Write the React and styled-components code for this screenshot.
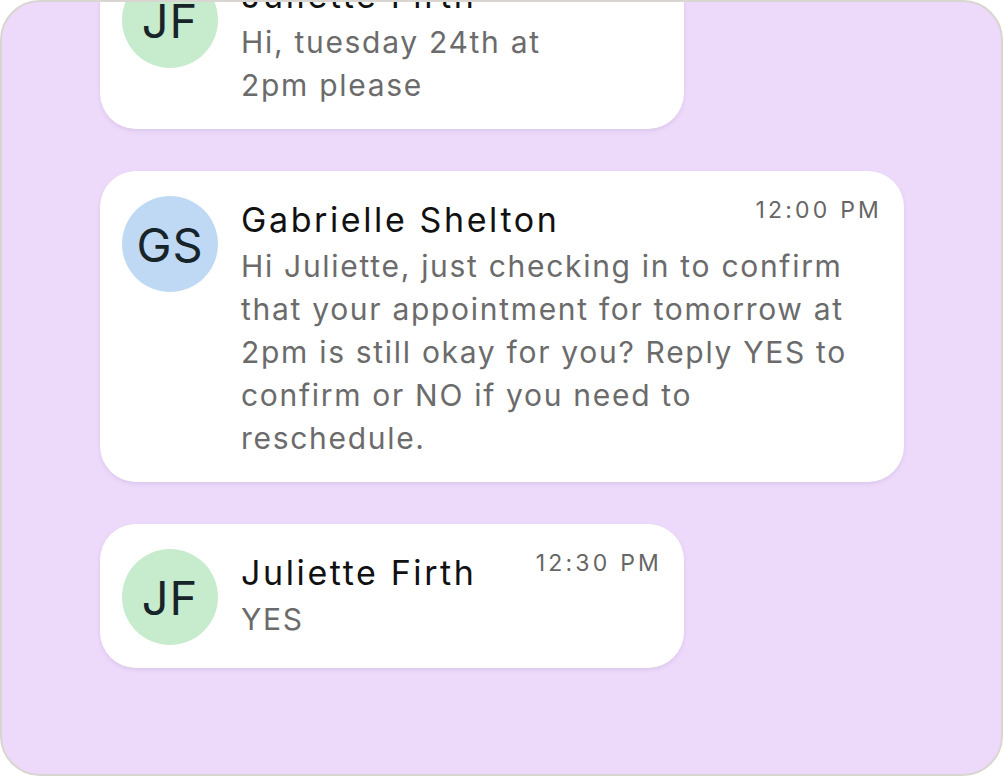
import React from 'react'
import styled, { createGlobalStyle } from 'styled-components'

const GlobalStyle = createGlobalStyle`
  html, body {
    margin: 0;
    padding: 0;
    background: #ffffff;
  }
  body {
    font-family: Inter, "Noto Sans", "Liberation Sans", sans-serif;
  }
`

const messages = [
  {
    id: 1,
    initials: 'JF',
    name: 'Juliette Firth',
    time: '11:45 AM',
    text: 'Hi, tuesday 24th at 2pm please',
    tone: 'green',
    width: 584,
    textWidth: 330,
  },
  {
    id: 2,
    initials: 'GS',
    name: 'Gabrielle Shelton',
    time: '12:00 PM',
    text:
      'Hi Juliette, just checking in to confirm that your appointment for tomorrow at 2pm is still okay for you? Reply YES to confirm or NO if you need to reschedule.',
    tone: 'blue',
    width: 804,
  },
  {
    id: 3,
    initials: 'JF',
    name: 'Juliette Firth',
    time: '12:30 PM',
    text: 'YES',
    tone: 'green',
    width: 584,
  },
]

const tones = {
  green: '#c7ebcd',
  blue: '#bfd9f4',
}

export default function App() {
  return (
    <>
      <GlobalStyle />
      <Frame>
        <Thread>
          {messages.map(m => (
            <Card key={m.id} width={m.width}>
              <Avatar tone={m.tone}>{m.initials}</Avatar>
              <Body>
                <Header>
                  <Name>{m.name}</Name>
                  <Time>{m.time}</Time>
                </Header>
                <Text maxWidth={m.textWidth}>{m.text}</Text>
              </Body>
            </Card>
          ))}
        </Thread>
      </Frame>
    </>
  )
}

const Frame = styled.div`
  box-sizing: border-box;
  width: 1003px;
  height: 776px;
  background: #eddafb;
  border: 2px solid #d9d5d0;
  border-radius: 40px;
  overflow: hidden;
`

const Thread = styled.div`
  box-sizing: border-box;
  height: 100%;
  display: flex;
  flex-direction: column;
  justify-content: flex-end;
  align-items: flex-start;
  gap: 42px;
  padding: 0 0 106px 98px;
`

const Card = styled.div`
  box-sizing: border-box;
  flex-shrink: 0;
  width: ${p => p.width}px;
  display: flex;
  align-items: flex-start;
  gap: 23px;
  padding: 24px 22px 22px 22px;
  background: #ffffff;
  border-radius: 36px;
  box-shadow: 0 2px 4px rgba(60, 30, 90, 0.1);
`

const Avatar = styled.div`
  flex-shrink: 0;
  width: 96px;
  height: 96px;
  margin-top: 1px;
  border-radius: 50%;
  display: flex;
  align-items: center;
  justify-content: center;
  background: ${p => tones[p.tone]};
  color: #17242a;
  font-size: 47px;
  letter-spacing: 1px;
`

const Body = styled.div`
  flex: 1;
  min-width: 0;
  min-height: 98px;
  display: flex;
  flex-direction: column;
`

const Header = styled.div`
  display: flex;
  align-items: flex-start;
  justify-content: space-between;
  gap: 12px;
`

const Name = styled.div`
  font-size: 34px;
  line-height: 50px;
  color: #111111;
  letter-spacing: 2.6px;
`

const Time = styled.div`
  font-size: 23px;
  line-height: 30px;
  color: #666666;
  letter-spacing: 3.2px;
  white-space: nowrap;
`

const Text = styled.div`
  max-width: ${p => (p.maxWidth ? `${p.maxWidth}px` : 'none')};
  font-size: 30px;
  line-height: 43px;
  color: #6b6b6b;
  letter-spacing: 1.7px;
`
